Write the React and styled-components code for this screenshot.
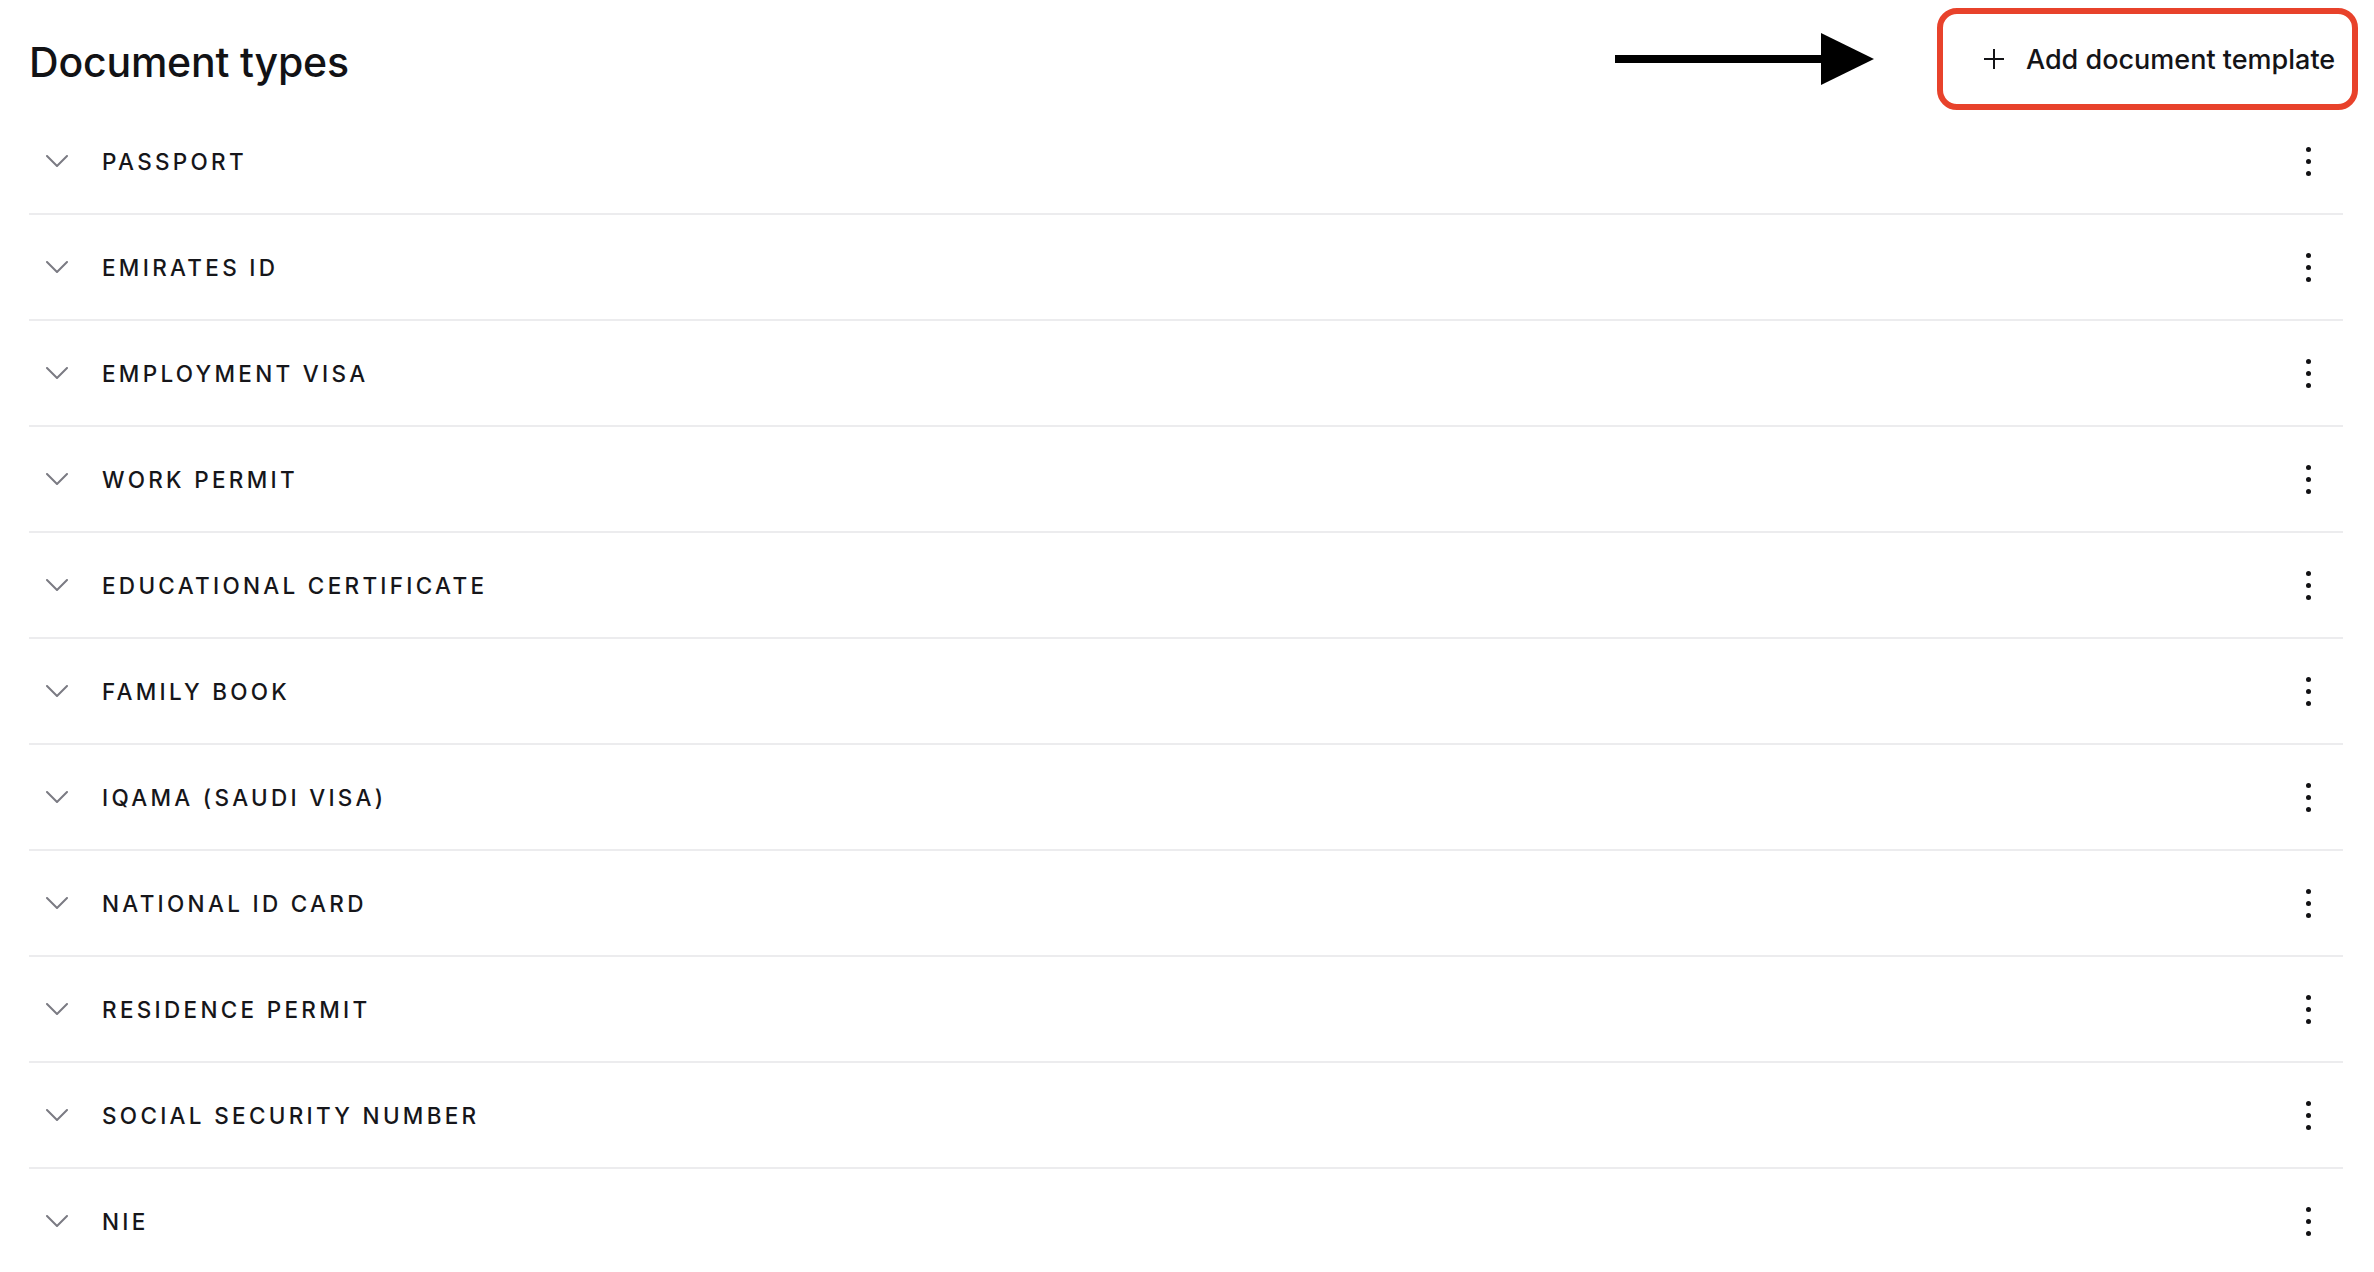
import React from "react"
import styled, { createGlobalStyle } from "styled-components"

const GlobalStyle = createGlobalStyle`
  html, body {
    margin: 0;
    padding: 0;
    background: #ffffff;
  }
  body {
    font-family: Inter, "Noto Sans", "Liberation Sans", sans-serif;
    color: #16161a;
    -webkit-font-smoothing: antialiased;
  }
`

const Page = styled.div`
  padding: 0 31px 0 29px;
  height: 1272px;
  overflow: hidden;
  box-sizing: border-box;
`

const Header = styled.header`
  display: flex;
  align-items: center;
  justify-content: space-between;
  height: 109px;
  padding-top: 9px;
  margin-right: -15px;
  box-sizing: border-box;
`

const Title = styled.h1`
  margin: 6px 0 0;
  font-size: 41px;
  font-weight: 500;
  letter-spacing: -0.2px;
  color: #121215;
`

const Actions = styled.div`
  display: flex;
  align-items: center;
  gap: 62px;
`

const Highlight = styled.div`
  display: flex;
  align-items: center;
  width: 421px;
  height: 102px;
  box-sizing: border-box;
  border: 6px solid #e8422b;
  border-radius: 20px;
  padding-left: 40px;
`

const AddButton = styled.button`
  display: flex;
  align-items: center;
  gap: 21px;
  border: none;
  background: none;
  padding: 0;
  font-family: inherit;
  font-size: 27px;
  font-weight: 500;
  color: #141417;
  cursor: pointer;
`

const List = styled.div`
  display: flex;
  flex-direction: column;
`

const Row = styled.div`
  display: flex;
  align-items: center;
  height: 106px;
  box-sizing: border-box;
  border-bottom: 2px solid #ececee;
  padding: 0 19px 0 17px;
`

const Chevron = styled.span`
  display: flex;
  width: 22px;
  margin-right: 34px;
  color: #7b7b83;
`

const Label = styled.span`
  flex: 1;
  font-size: 22.5px;
  font-weight: 500;
  letter-spacing: 3.3px;
  text-transform: uppercase;
  color: #16161a;
`

const MenuButton = styled.button`
  display: flex;
  flex-direction: column;
  align-items: center;
  gap: 7px;
  width: 32px;
  border: none;
  background: none;
  padding: 0;
  cursor: pointer;
`

const Dot = styled.span`
  width: 5px;
  height: 5px;
  border-radius: 50%;
  background: #111114;
`

const ChevronIcon = () => (
  <svg width="22" height="12" viewBox="0 0 22 12" fill="none">
    <path d="M1 1l10 10L21 1" stroke="currentColor" strokeWidth="2" strokeLinecap="round" strokeLinejoin="round" />
  </svg>
)

const PlusIcon = () => (
  <svg width="22" height="22" viewBox="0 0 22 22" fill="none">
    <path d="M11 1v20M1 11h20" stroke="#141417" strokeWidth="2" />
  </svg>
)

const Arrow = () => (
  <svg width="260" height="52" viewBox="0 0 260 52">
    <rect x="0" y="22" width="210" height="8" fill="#000" />
    <polygon points="206,0 259,26 206,52" fill="#000" />
  </svg>
)

const documentTypes = [
  "Passport",
  "Emirates ID",
  "Employment Visa",
  "Work Permit",
  "Educational Certificate",
  "Family Book",
  "Iqama (Saudi Visa)",
  "National ID Card",
  "Residence Permit",
  "Social Security Number",
  "NIE",
]

const App = () => {
  return (
    <>
      <GlobalStyle />
      <Page>
        <Header>
          <Title>Document types</Title>
          <Actions>
            <Arrow />
            <Highlight>
              <AddButton>
                <PlusIcon />
                Add document template
              </AddButton>
            </Highlight>
          </Actions>
        </Header>
        <List>
          {documentTypes.map((name) => (
            <Row key={name}>
              <Chevron>
                <ChevronIcon />
              </Chevron>
              <Label>{name}</Label>
              <MenuButton aria-label="More options">
                <Dot />
                <Dot />
                <Dot />
              </MenuButton>
            </Row>
          ))}
        </List>
      </Page>
    </>
  )
}

export default App
